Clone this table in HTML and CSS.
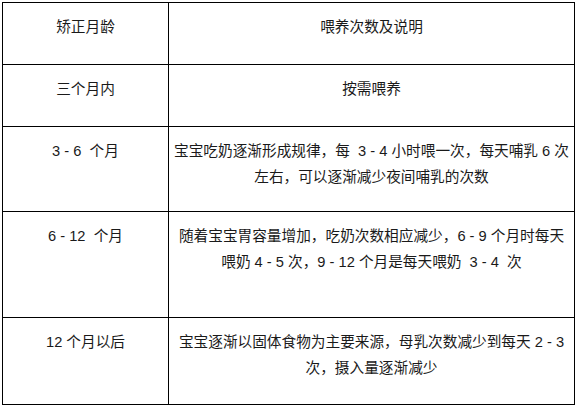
FILE: index.html
```html
<!DOCTYPE html>
<html lang="zh-CN">
<head>
<meta charset="utf-8">
<title>喂养次数</title>
<link rel="stylesheet" href="styles.css">
</head>
<body>
<div class="table" role="table">
  <div class="cell h1 left">矫正月龄</div>
  <div class="cell h1 right">喂养次数及说明</div>

  <div class="cell h2 left">三个月内</div>
  <div class="cell h2 right">按需喂养</div>

  <div class="cell h3 left">3 - 6 &nbsp;个月</div>
  <div class="cell h3 right">宝宝吃奶逐渐形成规律，每&nbsp; 3 - 4 小时喂一次，每天哺乳 6 次左右，可以逐渐减少夜间哺乳的次数</div>

  <div class="cell h4 left">6 - 12 &nbsp;个月</div>
  <div class="cell h4 right">随着宝宝胃容量增加，吃奶次数相应减少，6 - 9 个月时每天喂奶 4 - 5 次，9 - 12 个月是每天喂奶&nbsp; 3 - 4 &nbsp;次</div>

  <div class="cell h5 left">12 个月以后</div>
  <div class="cell h5 right">宝宝逐渐以固体食物为主要来源，母乳次数减少到每天 2 - 3 次，摄入量逐渐减少</div>
</div>
</body>
</html>
```

FILE: styles.css
```css
html, body {
  margin: 0;
  padding: 0;
  background: #ffffff;
}

body {
  font-family: "Liberation Sans", "Noto Sans CJK SC", sans-serif;
  font-size: 14.67px;
  color: #1a1a1a;
}

.table {
  margin: 2px 0 0 2px;
  width: 573px;
  box-sizing: border-box;
  display: grid;
  grid-template-columns: 166px 406px;
  border-left: 1px solid #000;
  border-top: 1px solid #000;
}

.cell {
  box-sizing: border-box;
  border-right: 1px solid #000;
  border-bottom: 1px solid #000;
  padding: 11px 4px 0 4px;
  line-height: 26px;
  text-align: center;
}

.h1 { height: 62px; }
.h2 { height: 62px; }
.h3 { height: 85px; }
.h4 { height: 106px; }
.h5 { height: 87px; }
```
